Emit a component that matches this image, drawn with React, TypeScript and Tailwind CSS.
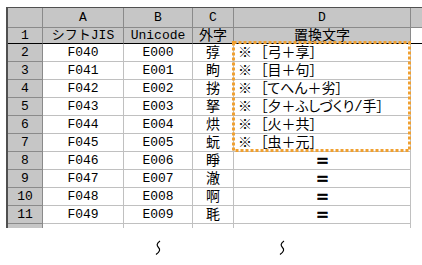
import clsx from "clsx";

// column widths, each one counting its own right grid line
const W = ["w-[35px]", "w-[81px]", "w-[69px]", "w-[41px]", "w-[177px]"];

const rows = [
  { n: 2, sjis: "F040", uni: "E000", gaiji: "弴", alt: "※ ［弓＋享］" },
  { n: 3, sjis: "F041", uni: "E001", gaiji: "眗", alt: "※ ［目＋句］" },
  { n: 4, sjis: "F042", uni: "E002", gaiji: "挘", alt: "※ ［てへん＋劣］" },
  { n: 5, sjis: "F043", uni: "E003", gaiji: "拏", alt: "※ ［夕＋ふしづくり/手］" },
  { n: 6, sjis: "F044", uni: "E004", gaiji: "烘", alt: "※ ［火＋共］" },
  { n: 7, sjis: "F045", uni: "E005", gaiji: "蚖", alt: "※ ［虫＋元］" },
  { n: 8, sjis: "F046", uni: "E006", gaiji: "睜", alt: "" },
  { n: 9, sjis: "F047", uni: "E007", gaiji: "澈", alt: "" },
  { n: 10, sjis: "F048", uni: "E008", gaiji: "啊", alt: "" },
  { n: 11, sjis: "F049", uni: "E009", gaiji: "毦", alt: "" },
];

const font = "font-['Liberation_Mono','Noto_Sans_CJK_JP',monospace]";

function HeadRow() {
  const labels = ["", "A", "B", "C", "D"];
  return (
    <div className="flex h-[20px]">
      {labels.map((l, i) => (
        <div
          key={i}
          className={clsx(
            W[i],
            "flex items-center justify-center bg-[#c6c6c6] border-r border-b border-[#8a8a8a] text-[13px] shrink-0"
          )}
        >
          {l}
        </div>
      ))}
      <div className="flex-1 bg-[#c6c6c6] border-b border-[#8a8a8a]" />
    </div>
  );
}

function TitleRow() {
  const labels = ["1", "シフトJIS", "Unicode", "外字", "置換文字"];
  return (
    <div className="flex h-[16px]">
      {labels.map((l, i) => (
        <div
          key={i}
          className={clsx(
            W[i],
            "flex items-center justify-center bg-[#c6c6c6] border-r border-[#8a8a8a] border-b border-b-black shrink-0",
            i >= 3 ? "text-[14px]" : "text-[13px]"
          )}
        >
          {l}
        </div>
      ))}
      <div className="flex-1 border-b border-black" />
    </div>
  );
}

function DataRow({ r }: { r: (typeof rows)[number] }) {
  return (
    <div className="flex h-[18px] text-[13px]">
      <div className={clsx(W[0], "flex items-center justify-center bg-[#c6c6c6] border-r border-b border-[#8a8a8a] shrink-0")}>
        {r.n}
      </div>
      <div className={clsx(W[1], "flex items-center justify-center border-r border-b border-[#c0c0c0] shrink-0")}>
        {r.sjis}
      </div>
      <div className={clsx(W[2], "flex items-center justify-center border-r border-b border-[#c0c0c0] shrink-0")}>
        {r.uni}
      </div>
      <div className={clsx(W[3], "flex items-center justify-center border-r border-b border-[#c0c0c0] text-[14px] shrink-0")}>
        {r.gaiji}
      </div>
      {r.alt ? (
        <div className={clsx(W[4], "flex items-center pl-[4px] border-r border-b border-[#c0c0c0] text-[14px] [font-feature-settings:'palt'] shrink-0 whitespace-nowrap")}>
          {r.alt}
        </div>
      ) : (
        <div className={clsx(W[4], "flex items-center justify-center border-r border-b border-[#c0c0c0] shrink-0")}>
          <span className="text-[15px] leading-[15px] font-bold font-['Liberation_Sans',sans-serif] [-webkit-text-stroke:0.6px_black] scale-x-125">
            =
          </span>
        </div>
      )}
      <div className="flex-1" />
    </div>
  );
}

function TailRow() {
  return (
    <div className="flex h-[4px]">
      <div className={clsx(W[0], "bg-[#c6c6c6] border-r border-[#8a8a8a] shrink-0")} />
      <div className={clsx(W[1], "border-r border-[#c0c0c0] shrink-0")} />
      <div className={clsx(W[2], "border-r border-[#c0c0c0] shrink-0")} />
      <div className={clsx(W[3], "border-r border-[#c0c0c0] shrink-0")} />
      <div className={clsx(W[4], "border-r border-[#c0c0c0] shrink-0")} />
    </div>
  );
}

// the "omitted rows" squiggle
function Squiggle() {
  return (
    <svg width="8" height="16" viewBox="0 0 8 16">
      <path d="M6 1 C2.5 3.5 2.5 5.5 4.5 7.5 C6.5 9.5 6 11.5 2 14.5" fill="none" stroke="#000" strokeWidth="1.2" />
    </svg>
  );
}

export default function App() {
  return (
    <div className={clsx("relative w-[422px] h-[265px] bg-white text-black overflow-hidden leading-none", font)}>
      <div className="pt-[7px] pl-[6px]">
        <div className="border-l-2 border-t border-[#505050]">
          <HeadRow />
          <TitleRow />
          {rows.map((r) => (
            <DataRow key={r.n} r={r} />
          ))}
          <TailRow />
        </div>
      </div>

      <div className="flex mt-[12px]">
        <span className="ml-[154px]">
          <Squiggle />
        </span>
        <span className="ml-[116px]">
          <Squiggle />
        </span>
      </div>

      {/* copy marquee around D2:D7 */}
      <svg className="absolute left-[232px] top-[41px]" width="180" height="112">
        <rect
          x="1.5"
          y="1.5"
          width="176"
          height="108"
          fill="none"
          stroke="#f0a030"
          strokeWidth="3"
          strokeDasharray="3 2"
        />
      </svg>
    </div>
  );
}
